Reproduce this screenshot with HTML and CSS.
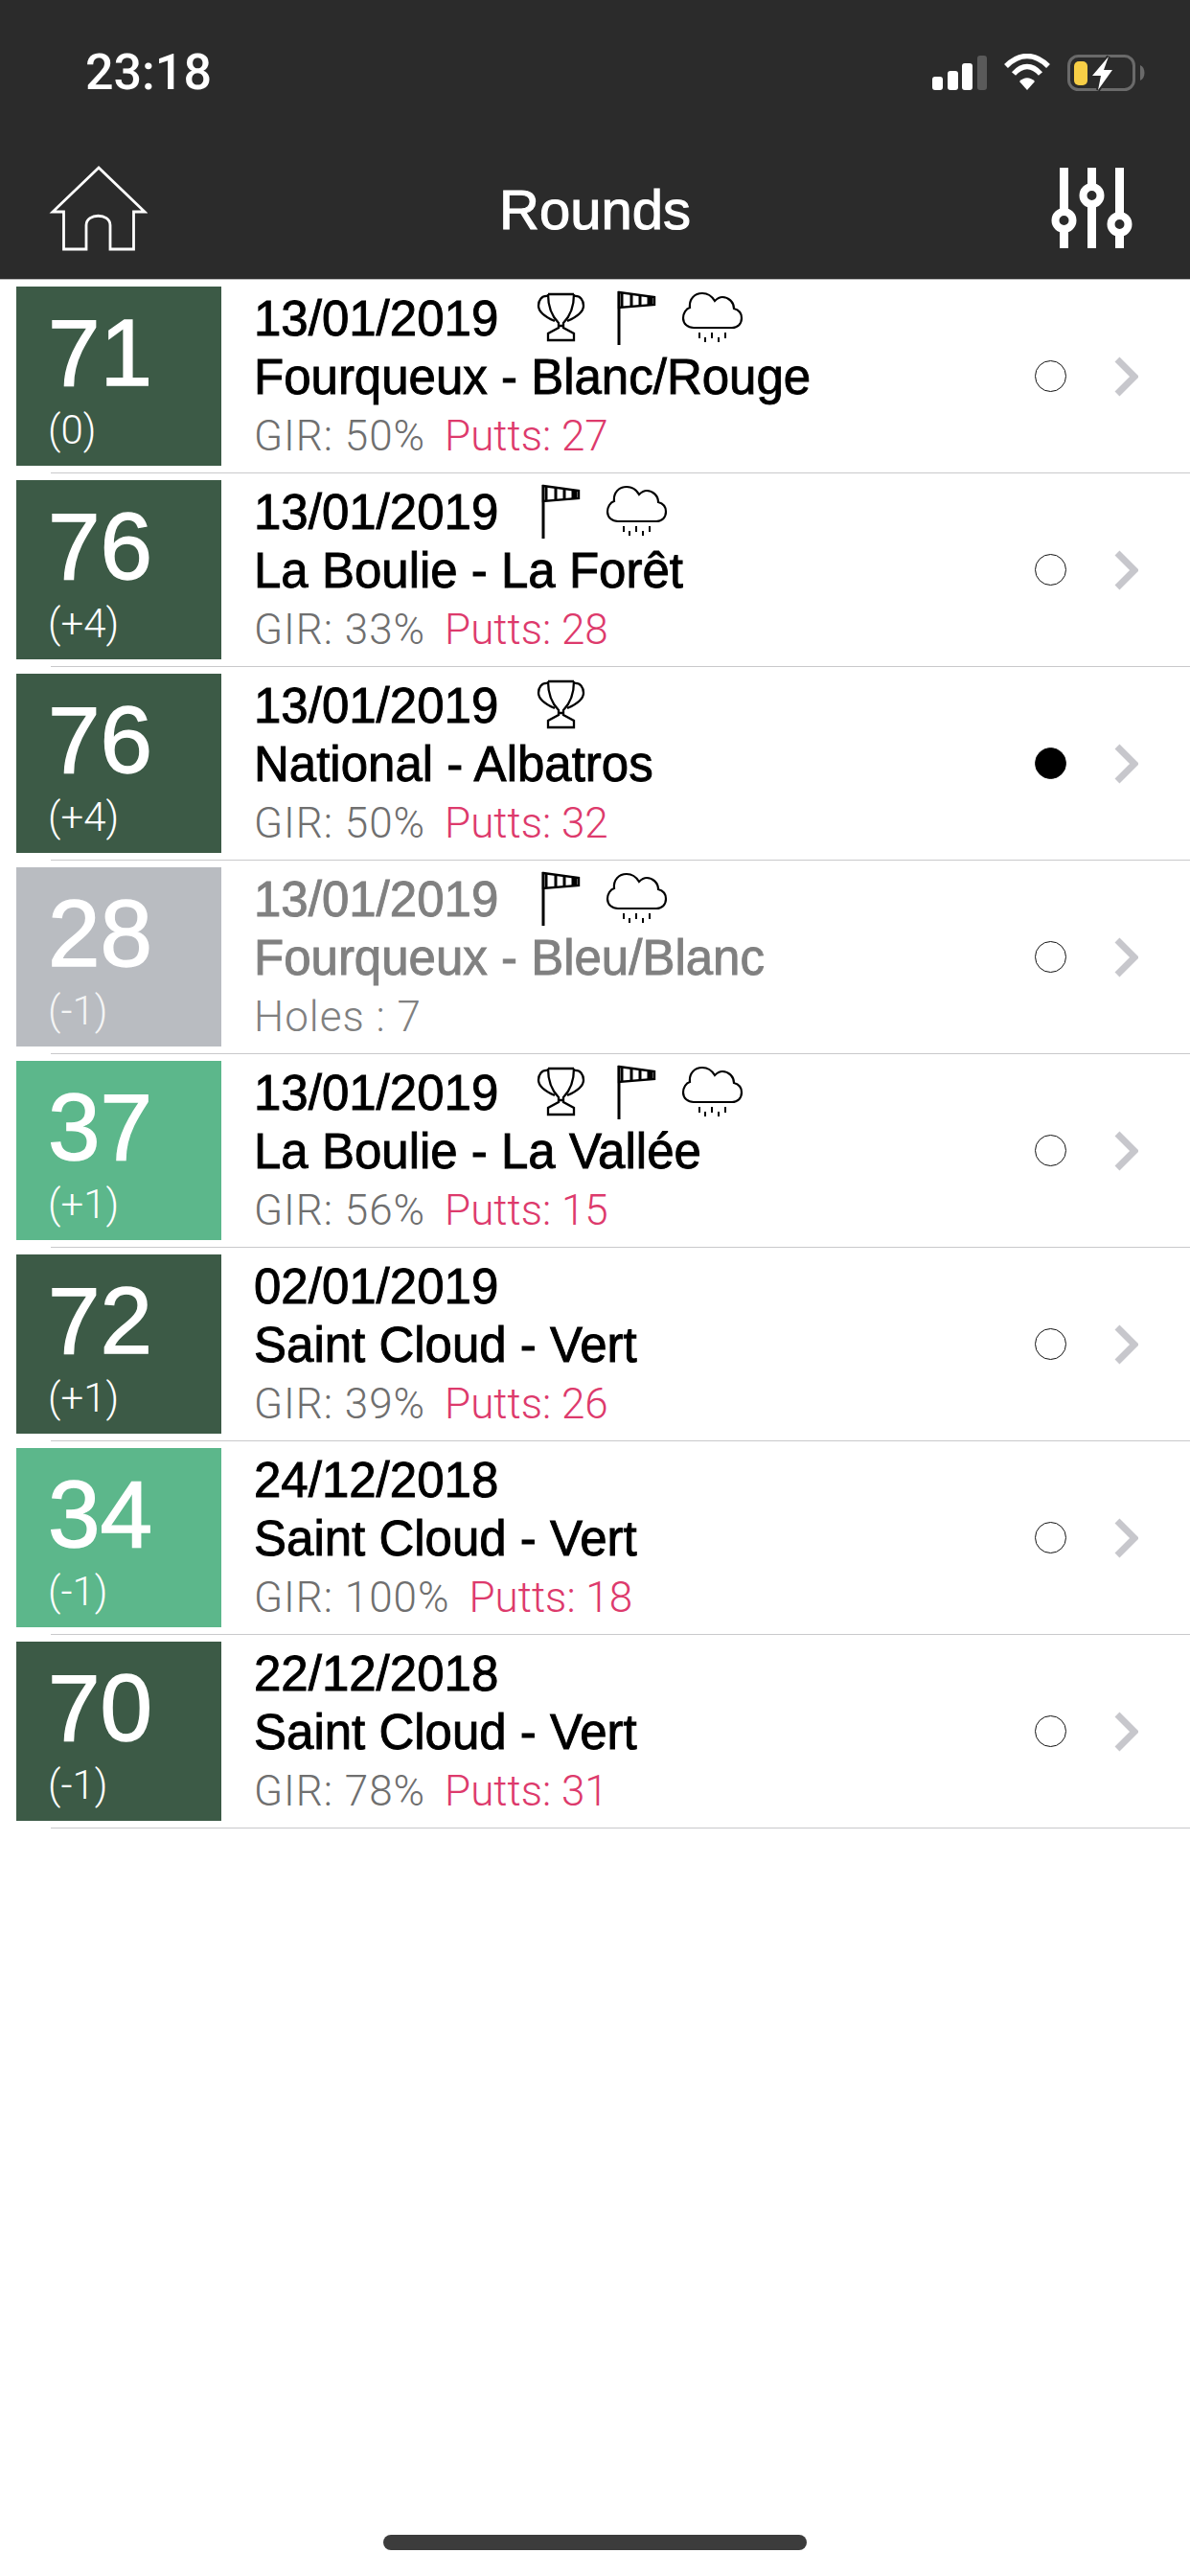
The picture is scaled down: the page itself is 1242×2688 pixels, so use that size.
FILE: index.html
```html
<!DOCTYPE html>
<html lang="en">
<head>
<meta charset="utf-8">
<title>Rounds</title>
<link rel="stylesheet" href="styles.css">
</head>
<body>
<svg class="defs" width="0" height="0" aria-hidden="true">
  <symbol id="trophy" viewBox="0 0 79 60">
    <path d="M26 5H53M26 5C26 18 30 28 37 35V40L26 46V53H53V46L42 40V35C49 28 53 18 53 5M26 7C19 6 16 12 16 17C16 24 26 30 33 33M53 7C60 6 63 12 63 17C63 24 53 30 46 33M37 38H42" fill="none" stroke="#000" stroke-width="2.3"/>
  </symbol>
  <symbol id="flag" viewBox="0 0 79 60">
    <path d="M21 2V58" fill="none" stroke="#000" stroke-width="3"/>
    <path d="M21 3L58 8V16L21 19Z" fill="#fff" stroke="#000" stroke-width="2.4"/>
    <path d="M24 4V18M34 5V17M43 6V17M52 7V16M55 8V16" fill="none" stroke="#000" stroke-width="3"/>
  </symbol>
  <symbol id="cloud" viewBox="0 0 79 60">
    <path d="M20 40H60C66 40 70 36 70 30C70 24 66 21 62 20C62 13 56 8 50 8C46 8 44 10 42 12C39 7 34 4 29 4C21 4 15 10 16 19C12 20 9 25 9 30C9 36 14 40 20 40Z" fill="none" stroke="#000" stroke-width="2.2"/>
    <path d="M26 45V51M32 50V55M39 45V51M46 50V55M53 45V51" fill="none" stroke="#000" stroke-width="2"/>
  </symbol>
  <symbol id="chevron" viewBox="0 0 25 42">
    <path d="M3 3L21 21L3 39" fill="none" stroke="#c7c7cc" stroke-width="7"/>
  </symbol>
</svg>

<div class="page">
  <header class="top">
    <div class="status">
      <span class="time">23:18</span>
      <svg class="status-icons" width="226" height="40" viewBox="973 56 226 40">
        <rect x="973" y="80" width="11" height="14" rx="3" fill="#fff"/>
        <rect x="989" y="74" width="11" height="20" rx="3" fill="#fff"/>
        <rect x="1004" y="66" width="11" height="28" rx="3" fill="#fff"/>
        <rect x="1020" y="58" width="10" height="36" rx="3" fill="#5a5a5a"/>
        <path d="M1050 69C1064 55 1080 55 1094 69" fill="none" stroke="#fff" stroke-width="5.5"/>
        <path d="M1058 77C1067 67 1077 67 1086 77" fill="none" stroke="#fff" stroke-width="5.5"/>
        <path d="M1064 85C1069 80 1075 80 1080 85L1072 94Z" fill="#fff"/>
        <rect x="1115.500" y="58.500" width="68" height="35" rx="10" fill="none" stroke="#6a6a6a" stroke-width="3"/>
        <path d="M1190 68C1196 70 1196 82 1190 84Z" fill="#6a6a6a"/>
        <rect x="1121" y="64" width="14" height="25" rx="5" fill="#f7ce46"/>
        <path d="M1157 59L1140 79H1149L1146 94L1161 73H1152Z" fill="#fff" stroke="#2b2b2b" stroke-width="4" paint-order="stroke"/>
      </svg>
    </div>
    <nav class="nav">
      <svg class="nav-home" width="104" height="90" viewBox="50 173 104 90">
        <path d="M103 175L55 221H66.500V260H90V235C90 222 115 222 115 235V260H139.500V221H151Z" fill="none" stroke="#fff" stroke-width="2.800"/>
      </svg>
      <h1 class="nav-title">Rounds</h1>
      <svg class="nav-filter" width="90" height="86" viewBox="1095 174 90 86">
        <path d="M1110.500 175V259M1139.500 175V259M1168.500 175V259" fill="none" stroke="#fff" stroke-width="9"/>
        <circle cx="1110.500" cy="230" r="9" fill="#2b2b2b" stroke="#fff" stroke-width="8"/>
        <circle cx="1139.500" cy="204" r="9" fill="#2b2b2b" stroke="#fff" stroke-width="8"/>
        <circle cx="1168.500" cy="234" r="9" fill="#2b2b2b" stroke="#fff" stroke-width="8"/>
      </svg>
    </nav>
  </header>

  <main class="list">
    <article class="row">
      <div class="score dark"><span class="strokes">71</span><span class="delta">(0)</span></div>
      <div class="info">
        <div class="line-date"><span class="date">13/01/2019</span><svg class="ico"><use href="#trophy"/></svg><svg class="ico"><use href="#flag"/></svg><svg class="ico"><use href="#cloud"/></svg></div>
        <div class="course">Fourqueux - Blanc/Rouge</div>
        <div class="stats"><span class="gir">GIR: 50%</span><span class="putts">Putts: 27</span></div>
      </div>
      <span class="radio"></span>
      <svg class="chev"><use href="#chevron"/></svg>
    </article>
    <div class="sep"></div>
    <article class="row">
      <div class="score dark"><span class="strokes">76</span><span class="delta">(+4)</span></div>
      <div class="info">
        <div class="line-date"><span class="date">13/01/2019</span><svg class="ico"><use href="#flag"/></svg><svg class="ico"><use href="#cloud"/></svg></div>
        <div class="course">La Boulie - La Forêt</div>
        <div class="stats"><span class="gir">GIR: 33%</span><span class="putts">Putts: 28</span></div>
      </div>
      <span class="radio"></span>
      <svg class="chev"><use href="#chevron"/></svg>
    </article>
    <div class="sep"></div>
    <article class="row">
      <div class="score dark"><span class="strokes">76</span><span class="delta">(+4)</span></div>
      <div class="info">
        <div class="line-date"><span class="date">13/01/2019</span><svg class="ico"><use href="#trophy"/></svg></div>
        <div class="course">National - Albatros</div>
        <div class="stats"><span class="gir">GIR: 50%</span><span class="putts">Putts: 32</span></div>
      </div>
      <span class="radio on"></span>
      <svg class="chev"><use href="#chevron"/></svg>
    </article>
    <div class="sep"></div>
    <article class="row muted">
      <div class="score grey"><span class="strokes">28</span><span class="delta">(-1)</span></div>
      <div class="info">
        <div class="line-date"><span class="date">13/01/2019</span><svg class="ico"><use href="#flag"/></svg><svg class="ico"><use href="#cloud"/></svg></div>
        <div class="course">Fourqueux - Bleu/Blanc</div>
        <div class="stats"><span class="gir">Holes : 7</span></div>
      </div>
      <span class="radio"></span>
      <svg class="chev"><use href="#chevron"/></svg>
    </article>
    <div class="sep"></div>
    <article class="row">
      <div class="score light"><span class="strokes">37</span><span class="delta">(+1)</span></div>
      <div class="info">
        <div class="line-date"><span class="date">13/01/2019</span><svg class="ico"><use href="#trophy"/></svg><svg class="ico"><use href="#flag"/></svg><svg class="ico"><use href="#cloud"/></svg></div>
        <div class="course">La Boulie - La Vallée</div>
        <div class="stats"><span class="gir">GIR: 56%</span><span class="putts">Putts: 15</span></div>
      </div>
      <span class="radio"></span>
      <svg class="chev"><use href="#chevron"/></svg>
    </article>
    <div class="sep"></div>
    <article class="row">
      <div class="score dark"><span class="strokes">72</span><span class="delta">(+1)</span></div>
      <div class="info">
        <div class="line-date"><span class="date">02/01/2019</span></div>
        <div class="course">Saint Cloud - Vert</div>
        <div class="stats"><span class="gir">GIR: 39%</span><span class="putts">Putts: 26</span></div>
      </div>
      <span class="radio"></span>
      <svg class="chev"><use href="#chevron"/></svg>
    </article>
    <div class="sep"></div>
    <article class="row">
      <div class="score light"><span class="strokes">34</span><span class="delta">(-1)</span></div>
      <div class="info">
        <div class="line-date"><span class="date">24/12/2018</span></div>
        <div class="course">Saint Cloud - Vert</div>
        <div class="stats"><span class="gir">GIR: 100%</span><span class="putts">Putts: 18</span></div>
      </div>
      <span class="radio"></span>
      <svg class="chev"><use href="#chevron"/></svg>
    </article>
    <div class="sep"></div>
    <article class="row">
      <div class="score dark"><span class="strokes">70</span><span class="delta">(-1)</span></div>
      <div class="info">
        <div class="line-date"><span class="date">22/12/2018</span></div>
        <div class="course">Saint Cloud - Vert</div>
        <div class="stats"><span class="gir">GIR: 78%</span><span class="putts">Putts: 31</span></div>
      </div>
      <span class="radio"></span>
      <svg class="chev"><use href="#chevron"/></svg>
    </article>
    <div class="sep"></div>
  </main>

  <div class="home-bar"></div>
</div>
</body>
</html>
```

FILE: styles.css
```css
* { box-sizing: border-box; }
html, body { margin: 0; padding: 0; background: #fff; }
.defs { display: block; width: 0; height: 0; overflow: hidden; }

.page {
  width: 1242px;
  height: 2688px;
  display: flex;
  flex-direction: column;
  font-family: "Liberation Sans", Arial, sans-serif;
  color: #000;
}

.top {
  height: 292px;
  background: #2b2b2b;
  border-bottom: 1px solid #b5b5b5;
  flex: none;
  color: #fff;
}

.status {
  height: 150px;
  padding: 56px 43px 0 89px;
  display: flex;
  justify-content: space-between;
  align-items: flex-start;
}
.time {
  font-family: Roboto, sans-serif;
  font-weight: 500;
  font-size: 52px;
  line-height: 40px;
}

.nav {
  display: grid;
  grid-template-columns: 1fr auto 1fr;
  align-items: start;
  margin-top: 23px;
}
.nav-home { margin-left: 50px; }
.nav-title {
  margin: 13px 0 0;
  font-size: 58px;
  line-height: 66px;
  font-weight: 400;
  -webkit-text-stroke: 1.1px #fff;
}
.nav-filter { justify-self: end; margin: 1px 57px 0 0; }

.list { flex: 1; display: flex; flex-direction: column; }

.row {
  height: 201px;
  flex: none;
  display: flex;
  align-items: center;
  padding: 0 54px 0 17px;
}
.sep {
  height: 1px;
  flex: none;
  margin-left: 53px;
  background: #c9c9cb;
}

.score {
  width: 214px;
  height: 187px;
  flex: none;
  padding-left: 33px;
  color: #fff;
  display: flex;
  flex-direction: column;
}
.dark { background: #3c5a46; }
.light { background: #5cb78b; }
.grey { background: #b9bcc1; }

.strokes {
  font-size: 98px;
  line-height: 98px;
  margin-top: 20px;
  -webkit-text-stroke: 1.4px #fff;
}
.delta {
  font-family: Roboto, sans-serif;
  font-weight: 300;
  font-size: 42px;
  line-height: 48px;
  margin-top: 8px;
}
.grey .delta { opacity: 0.85; }

.info {
  flex: 1;
  margin-left: 34px;
  display: flex;
  flex-direction: column;
}
.line-date {
  display: flex;
  align-items: flex-start;
  height: 62px;
}
.date {
  width: 281px;
  flex: none;
  font-size: 51px;
  line-height: 62px;
  -webkit-text-stroke: 0.9px currentColor;
}
.ico {
  width: 79px;
  height: 60px;
  flex: none;
}
.course {
  font-size: 51px;
  line-height: 60px;
  height: 60px;
  -webkit-text-stroke: 0.9px currentColor;
}
.stats {
  font-family: Roboto, sans-serif;
  font-weight: 300;
  font-size: 44px;
  line-height: 62px;
  height: 60px;
  display: flex;
  gap: 20px;
  color: #6f6f6f;
}
.gir { letter-spacing: 1px; }
.putts { color: #dd3a6c; }

.muted .date, .muted .course { color: #808080; }
.muted .stats { color: #808080; }

.radio {
  width: 33px;
  height: 33px;
  flex: none;
  border: 1.5px solid #111;
  border-radius: 50%;
}
.radio.on { background: #000; }
.chev {
  width: 25px;
  height: 42px;
  flex: none;
  margin-left: 50px;
}

.home-bar {
  width: 442px;
  height: 16px;
  flex: none;
  margin: 0 auto 27px;
  border-radius: 8px;
  background: #3c3c3c;
}
```
